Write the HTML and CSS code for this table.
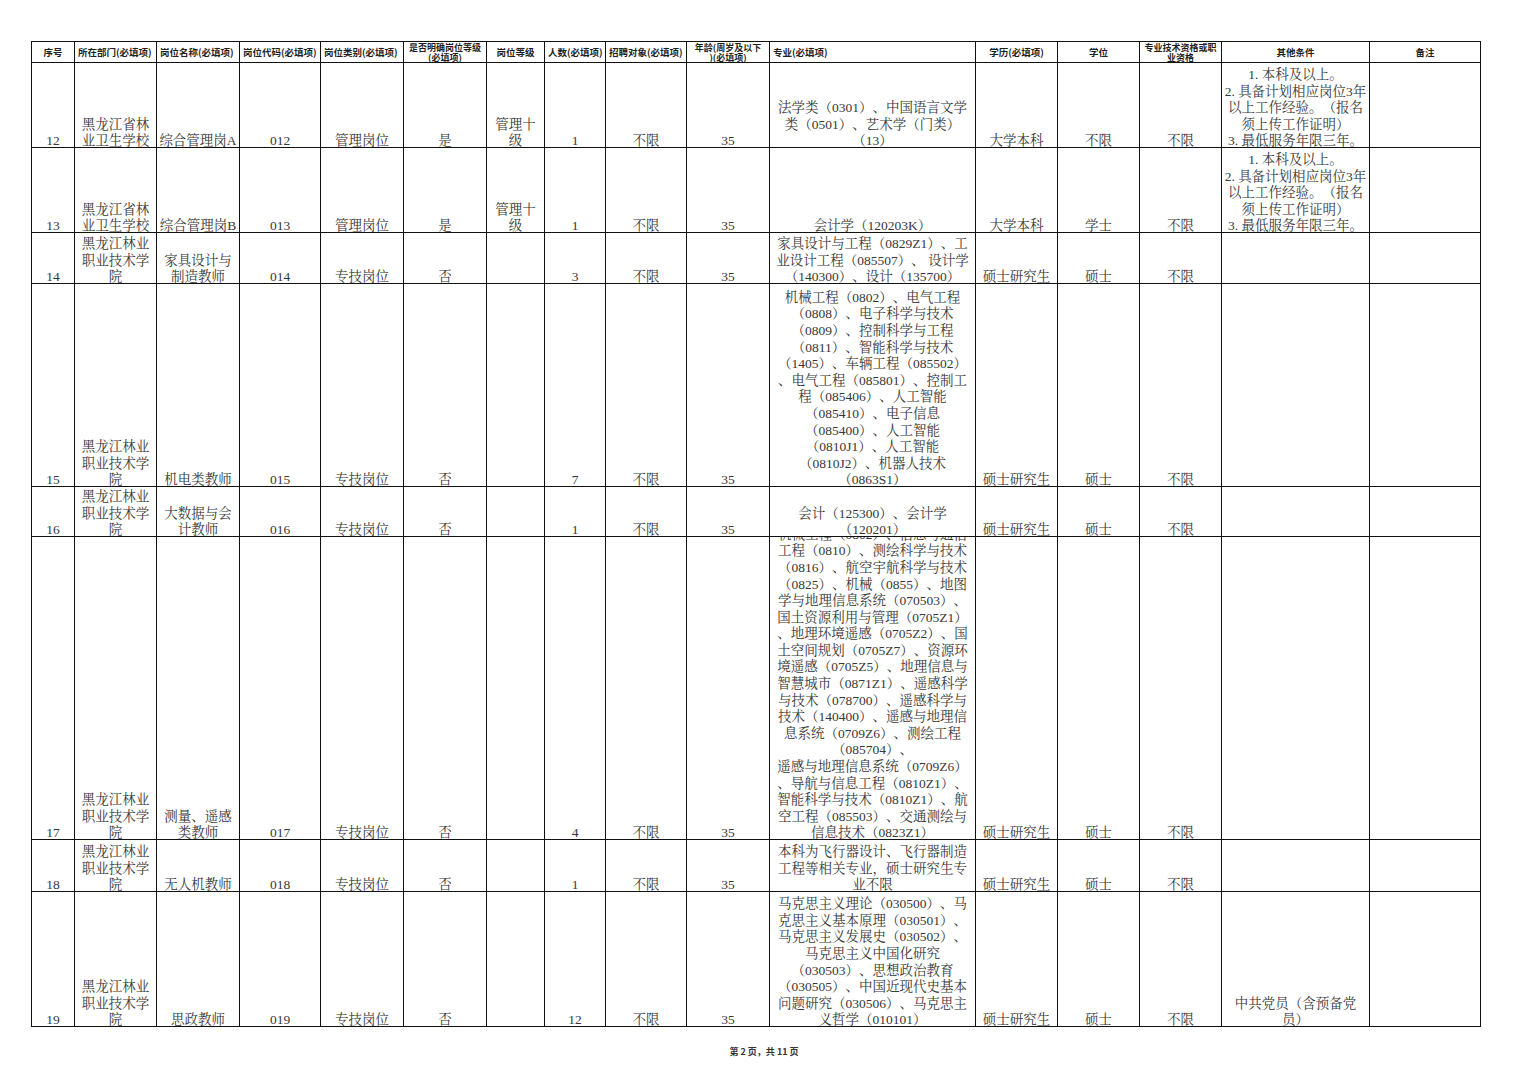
FILE: index.html
```html
<!DOCTYPE html>
<html lang="zh-CN">
<head>
<meta charset="utf-8">
<title>岗位表 第2页</title>
<link rel="stylesheet" href="styles.css">
</head>
<body>
<div class="page">
  <div class="sheet">
    <div class="th">序号</div>
    <div class="th l">所在部门(必填项)</div>
    <div class="th l">岗位名称(必填项)</div>
    <div class="th l">岗位代码(必填项)</div>
    <div class="th l">岗位类别(必填项)</div>
    <div class="th two">是否明确岗位等级<br>(必填项)</div>
    <div class="th">岗位等级</div>
    <div class="th l">人数(必填项)</div>
    <div class="th l">招聘对象(必填项)</div>
    <div class="th two">年龄(周岁及以下<br>)(必填项)</div>
    <div class="th l">专业(必填项)</div>
    <div class="th">学历(必填项)</div>
    <div class="th">学位</div>
    <div class="th two">专业技术资格或职<br>业资格</div>
    <div class="th">其他条件</div>
    <div class="th">备注</div>

    <!-- 12 -->
    <div class="td"><p>12</p></div>
    <div class="td"><p>黑龙江省林<br>业卫生学校</p></div>
    <div class="td"><p>综合管理岗A</p></div>
    <div class="td"><p>012</p></div>
    <div class="td"><p>管理岗位</p></div>
    <div class="td"><p>是</p></div>
    <div class="td"><p>管理十<br>级</p></div>
    <div class="td"><p>1</p></div>
    <div class="td"><p>不限</p></div>
    <div class="td"><p>35</p></div>
    <div class="td"><p>法学类（0301）、中国语言文学<br>类（0501）、艺术学（门类）<br>（13）</p></div>
    <div class="td"><p>大学本科</p></div>
    <div class="td"><p>不限</p></div>
    <div class="td"><p>不限</p></div>
    <div class="td"><p>1. 本科及以上。<br>2. 具备计划相应岗位3年<br>以上工作经验。（报名<br>须上传工作证明）<br>3. 最低服务年限三年。</p></div>
    <div class="td"></div>

    <!-- 13 -->
    <div class="td"><p>13</p></div>
    <div class="td"><p>黑龙江省林<br>业卫生学校</p></div>
    <div class="td"><p>综合管理岗B</p></div>
    <div class="td"><p>013</p></div>
    <div class="td"><p>管理岗位</p></div>
    <div class="td"><p>是</p></div>
    <div class="td"><p>管理十<br>级</p></div>
    <div class="td"><p>1</p></div>
    <div class="td"><p>不限</p></div>
    <div class="td"><p>35</p></div>
    <div class="td"><p>会计学（120203K）</p></div>
    <div class="td"><p>大学本科</p></div>
    <div class="td"><p>学士</p></div>
    <div class="td"><p>不限</p></div>
    <div class="td"><p>1. 本科及以上。<br>2. 具备计划相应岗位3年<br>以上工作经验。（报名<br>须上传工作证明）<br>3. 最低服务年限三年。</p></div>
    <div class="td"></div>

    <!-- 14 -->
    <div class="td"><p>14</p></div>
    <div class="td"><p>黑龙江林业<br>职业技术学<br>院</p></div>
    <div class="td"><p>家具设计与<br>制造教师</p></div>
    <div class="td"><p>014</p></div>
    <div class="td"><p>专技岗位</p></div>
    <div class="td"><p>否</p></div>
    <div class="td"></div>
    <div class="td"><p>3</p></div>
    <div class="td"><p>不限</p></div>
    <div class="td"><p>35</p></div>
    <div class="td"><p>家具设计与工程（0829Z1）、工<br>业设计工程（085507）、 设计学<br>（140300）、设计（135700）</p></div>
    <div class="td"><p>硕士研究生</p></div>
    <div class="td"><p>硕士</p></div>
    <div class="td"><p>不限</p></div>
    <div class="td"></div>
    <div class="td"></div>

    <!-- 15 -->
    <div class="td"><p>15</p></div>
    <div class="td"><p>黑龙江林业<br>职业技术学<br>院</p></div>
    <div class="td"><p>机电类教师</p></div>
    <div class="td"><p>015</p></div>
    <div class="td"><p>专技岗位</p></div>
    <div class="td"><p>否</p></div>
    <div class="td"></div>
    <div class="td"><p>7</p></div>
    <div class="td"><p>不限</p></div>
    <div class="td"><p>35</p></div>
    <div class="td"><p>机械工程（0802）、电气工程<br>（0808）、电子科学与技术<br>（0809）、控制科学与工程<br>（0811）、智能科学与技术<br>（1405）、车辆工程（085502）<br>、电气工程（085801）、控制工<br>程（085406）、人工智能<br>（085410）、电子信息<br>（085400）、人工智能<br>（0810J1）、人工智能<br>（0810J2）、机器人技术<br>（0863S1）</p></div>
    <div class="td"><p>硕士研究生</p></div>
    <div class="td"><p>硕士</p></div>
    <div class="td"><p>不限</p></div>
    <div class="td"></div>
    <div class="td"></div>

    <!-- 16 -->
    <div class="td"><p>16</p></div>
    <div class="td"><p>黑龙江林业<br>职业技术学<br>院</p></div>
    <div class="td"><p>大数据与会<br>计教师</p></div>
    <div class="td"><p>016</p></div>
    <div class="td"><p>专技岗位</p></div>
    <div class="td"><p>否</p></div>
    <div class="td"></div>
    <div class="td"><p>1</p></div>
    <div class="td"><p>不限</p></div>
    <div class="td"><p>35</p></div>
    <div class="td"><p>会计（125300）、会计学<br>（120201）</p></div>
    <div class="td"><p>硕士研究生</p></div>
    <div class="td"><p>硕士</p></div>
    <div class="td"><p>不限</p></div>
    <div class="td"></div>
    <div class="td"></div>

    <!-- 17 -->
    <div class="td"><p>17</p></div>
    <div class="td"><p>黑龙江林业<br>职业技术学<br>院</p></div>
    <div class="td"><p>测量、遥感<br>类教师</p></div>
    <div class="td"><p>017</p></div>
    <div class="td"><p>专技岗位</p></div>
    <div class="td"><p>否</p></div>
    <div class="td"></div>
    <div class="td"><p>4</p></div>
    <div class="td"><p>不限</p></div>
    <div class="td"><p>35</p></div>
    <div class="td"><p>机械工程（0802）、信息与通信<br>工程（0810）、测绘科学与技术<br>（0816）、航空宇航科学与技术<br>（0825）、机械（0855）、地图<br>学与地理信息系统（070503）、<br>国土资源利用与管理（0705Z1）<br>、地理环境遥感（0705Z2）、国<br>土空间规划（0705Z7）、资源环<br>境遥感（0705Z5）、地理信息与<br>智慧城市（0871Z1）、遥感科学<br>与技术（078700）、遥感科学与<br>技术（140400）、遥感与地理信<br>息系统（0709Z6）、测绘工程<br>（085704）、<br>遥感与地理信息系统（0709Z6）<br>、导航与信息工程（0810Z1）、<br>智能科学与技术（0810Z1）、航<br>空工程（085503）、交通测绘与<br>信息技术（0823Z1）</p></div>
    <div class="td"><p>硕士研究生</p></div>
    <div class="td"><p>硕士</p></div>
    <div class="td"><p>不限</p></div>
    <div class="td"></div>
    <div class="td"></div>

    <!-- 18 -->
    <div class="td"><p>18</p></div>
    <div class="td"><p>黑龙江林业<br>职业技术学<br>院</p></div>
    <div class="td"><p>无人机教师</p></div>
    <div class="td"><p>018</p></div>
    <div class="td"><p>专技岗位</p></div>
    <div class="td"><p>否</p></div>
    <div class="td"></div>
    <div class="td"><p>1</p></div>
    <div class="td"><p>不限</p></div>
    <div class="td"><p>35</p></div>
    <div class="td"><p>本科为飞行器设计、飞行器制造<br>工程等相关专业，硕士研究生专<br>业不限</p></div>
    <div class="td"><p>硕士研究生</p></div>
    <div class="td"><p>硕士</p></div>
    <div class="td"><p>不限</p></div>
    <div class="td"></div>
    <div class="td"></div>

    <!-- 19 -->
    <div class="td"><p>19</p></div>
    <div class="td"><p>黑龙江林业<br>职业技术学<br>院</p></div>
    <div class="td"><p>思政教师</p></div>
    <div class="td"><p>019</p></div>
    <div class="td"><p>专技岗位</p></div>
    <div class="td"><p>否</p></div>
    <div class="td"></div>
    <div class="td"><p>12</p></div>
    <div class="td"><p>不限</p></div>
    <div class="td"><p>35</p></div>
    <div class="td"><p>马克思主义理论（030500）、马<br>克思主义基本原理（030501）、<br>马克思主义发展史（030502）、<br>马克思主义中国化研究<br>（030503）、思想政治教育<br>（030505）、中国近现代史基本<br>问题研究（030506）、马克思主<br>义哲学（010101）</p></div>
    <div class="td"><p>硕士研究生</p></div>
    <div class="td"><p>硕士</p></div>
    <div class="td"><p>不限</p></div>
    <div class="td"><p>中共党员（含预备党<br>员）</p></div>
    <div class="td"></div>
  </div>
  <div class="footer">第 2 页，共 11 页</div>
</div>
</body>
</html>
```

FILE: styles.css
```css
html, body {
  margin: 0;
  padding: 0;
  background: #ffffff;
}

.page {
  width: 1528px;
  height: 1080px;
  padding-top: 41px;
  box-sizing: border-box;
}

.sheet {
  margin-left: 31px;
  width: max-content;
  display: grid;
  grid-template-columns: 43px 82px 83px 81px 83px 83px 58px 61px 81px 83px 206px 82px 82px 82px 148px 111px;
  grid-template-rows: 21px 85px 85px 51px 203px 50px 303px 52px 135px;
  border-top: 1px solid #111111;
  border-left: 1px solid #111111;
}

.th,
.td {
  box-sizing: border-box;
  border-right: 1px solid #111111;
  border-bottom: 1px solid #111111;
}

.th {
  display: flex;
  align-items: center;
  justify-content: center;
  text-align: center;
  padding: 0 2px;
  font-family: "Noto Sans CJK SC", "Noto Sans", sans-serif;
  font-weight: 700;
  font-size: 9.5px;
  line-height: 11px;
  color: #1f1f1f;
  white-space: nowrap;
}

.th.two {
  font-size: 9px;
  line-height: 9.6px;
  padding-top: 1px;
}

.th.l {
  justify-content: flex-start;
  text-align: left;
  padding-left: 3px;
}

.td {
  display: flex;
  flex-direction: column;
  justify-content: flex-end;
  align-items: center;
  overflow: hidden;
  padding: 0 2px;
  font-family: "Liberation Serif", "Noto Serif CJK SC", "Noto Sans CJK SC", serif;
  font-size: 13.5px;
  line-height: 16.6px;
  color: #383838;
  text-spacing-trim: space-all;
}

.td p {
  margin: 0 0 -3px 0;
  text-align: center;
  white-space: nowrap;
}

.footer {
  width: 1528px;
  margin-top: 19px;
  text-align: center;
  font-family: "Noto Sans CJK SC", "Liberation Serif", sans-serif;
  font-weight: 700;
  font-size: 9px;
  line-height: 12px;
  color: #333333;
}
```
